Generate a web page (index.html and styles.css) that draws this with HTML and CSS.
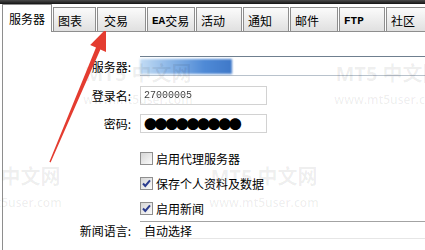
FILE: index.html
```html
<!DOCTYPE html>
<html lang="zh-CN">
<head>
  <meta charset="UTF-8" />
  <title>选项 - 服务器</title>
  <link rel="stylesheet" href="styles.css">
</head>
<body>
  <div class="topbar"></div>
  <div class="tabs">
    <div class="tab tab-server active">服务器</div>
    <div class="tab tab-chart">图表</div>
    <div class="tab tab-trade">交易</div>
    <div class="tab tab-ea"><span class="latin">EA</span>交易</div>
    <div class="tab tab-events">活动</div>
    <div class="tab tab-notify">通知</div>
    <div class="tab tab-mail">邮件</div>
    <div class="tab tab-ftp"><span class="latin">FTP</span></div>
    <div class="tab tab-community">社区</div>
  </div>

  <div class="panel">
    <div class="row row-server">
      <label class="label">服务器:</label>
      <div class="combo"><span class="hidden-name"></span></div>
    </div>
    <div class="row row-login">
      <label class="label">登录名:</label>
      <div class="input"><span class="login-value">27000005</span></div>
    </div>
    <div class="row row-pass">
      <label class="label">密码:</label>
      <div class="input"><span class="dots">●●●●●●●●●</span></div>
    </div>

    <div class="check-row">
      <span class="box"></span>启用代理服务器
    </div>
    <div class="check-row">
      <span class="box checked"><svg width="11" height="11" viewBox="0 0 11 11"><path d="M2 5.5 L4.3 8 L9 2.3" fill="none" stroke="#2c3d8f" stroke-width="2"/></svg></span>保存个人资料及数据
    </div>
    <div class="check-row">
      <span class="box checked"><svg width="11" height="11" viewBox="0 0 11 11"><path d="M2 5.5 L4.3 8 L9 2.3" fill="none" stroke="#2c3d8f" stroke-width="2"/></svg></span>启用新闻
    </div>

    <div class="row row-news">
      <label class="label">新闻语言:</label>
      <div class="select">自动选择</div>
    </div>
  </div>

  <!-- watermark -->
  <div class="wm wm-1"><div class="wm-title">MT5 中文网</div><div class="wm-url">www.mt5user.com</div></div>
  <div class="wm wm-2"><div class="wm-title">MT5 中文网</div><div class="wm-url">www.mt5user.com</div></div>
  <div class="wm wm-3"><div class="wm-title">MT5 中文网</div><div class="wm-url">www.mt5user.com</div></div>
  <div class="wm wm-4"><div class="wm-title">MT5 中文网</div><div class="wm-url">www.mt5user.com</div></div>

  <svg class="arrow" width="425" height="250" viewBox="0 0 425 250">
    <polygon points="106,29 106,52 100.4,49.6 50.6,162.4 49.4,161.8 96,47.4 90.2,45" fill="#e43c30"/>
  </svg>
</body>
</html>
```

FILE: styles.css
```css
* {
  box-sizing: border-box;
}
body {
  margin: 0;
  width: 425px;
  height: 250px;
  overflow: hidden;
  position: relative;
  background: #fff;
  font-family: "Noto Sans CJK SC", sans-serif;
  font-size: 12px;
  color: #000;
}
.topbar {
  height: 4px;
  background: linear-gradient(#4a4a4a, #141414);
}
.tabs {
  display: flex;
  align-items: flex-end;
  gap: 1px;
  height: 27px;
  padding-left: 2px;
  position: relative;
  z-index: 1;
}
.tab {
  flex: none;
  height: 24px;
  padding: 3px 0 0 4px;
  border: 1px solid #8e8e8e;
  border-bottom: none;
  background: linear-gradient(#fbfbfb, #e0e0e0);
  display: flex;
  align-items: center;
  line-height: 1;
}
.tab.active {
  height: 28px;
  margin-bottom: -1px;
  padding: 1px 0 0 6px;
  background: #fff;
}
.latin {
  font-family: "Liberation Mono", monospace;
  font-size: 11px;
  font-weight: bold;
}
.tab-server { width: 50px; }
.tab-chart { width: 43px; }
.tab-trade { width: 49px; padding-left: 6px; }
.tab-ea { width: 48px; }
.tab-events { width: 46px; }
.tab-notify { width: 46px; }
.tab-mail { width: 48px; }
.tab-ftp { width: 46px; }
.tab-community { width: 44px; }

.panel {
  margin-left: 2px;
  height: 219px;
  border-top: 1px solid #8e8e8e;
  border-left: 1px solid #8e8e8e;
  padding-top: 24px;
}
.row {
  display: flex;
  align-items: center;
}
.label {
  width: 128px;
  margin-right: 9px;
  text-align: right;
}
.row-server {
  height: 20px;
  margin-bottom: 10px;
}
.row-login {
  height: 19px;
  margin-bottom: 9px;
}
.row-pass {
  height: 19px;
  margin-bottom: 13px;
}
.combo {
  flex: 1;
  height: 20px;
  border-top: 1px solid #6f7f8f;
  border-bottom: 1px solid #b8c2cc;
  display: flex;
  align-items: center;
}
.hidden-name {
  display: block;
  width: 92px;
  height: 15px;
  background: linear-gradient(to right, #c3dcf4, #8fb9e8 30%, #4f8ad6 70%, #3f78c8);
  filter: blur(1px);
}
.input {
  width: 127px;
  height: 19px;
  border: 1px solid #d2d2d2;
  padding-left: 3px;
  display: flex;
  align-items: center;
}
.login-value {
  font-family: "Liberation Mono", monospace;
  font-size: 10px;
  color: #444;
  filter: blur(0.5px);
}
.dots {
  font-size: 13px;
  letter-spacing: -2.4px;
  line-height: 1;
}
.check-row {
  height: 25px;
  padding-left: 137px;
  display: flex;
  align-items: center;
}
.box {
  width: 13px;
  height: 13px;
  margin-right: 3px;
  border: 1px solid #8f8f8f;
  background: linear-gradient(135deg, #d6d6d6, #fbfbfb);
  display: flex;
  align-items: center;
  justify-content: center;
}
.row-news {
  height: 18px;
}
.select {
  flex: 1;
  height: 18px;
  padding-left: 4px;
  border-top: 1px solid #a3a3a3;
  border-bottom: 1px solid #e6e6e6;
  display: flex;
  align-items: center;
}

.wm {
  position: absolute;
  color: rgba(0, 0, 0, 0.07);
  font-family: "Open Sans", "Noto Sans CJK SC", sans-serif;
  pointer-events: none;
  text-align: center;
  width: 118px;
}
.wm-title {
  font-size: 20px;
  font-weight: bold;
  line-height: 22px;
}
.wm-url {
  font-size: 12px;
  font-weight: 600;
  margin-top: 6px;
}
.wm-1 { left: 79px; top: 63px; }
.wm-2 { left: 330px; top: 63px; }
.wm-3 { left: -52px; top: 166px; }
.wm-4 { left: 205px; top: 166px; }

.arrow {
  position: absolute;
  left: 0;
  top: 0;
  pointer-events: none;
}
```
